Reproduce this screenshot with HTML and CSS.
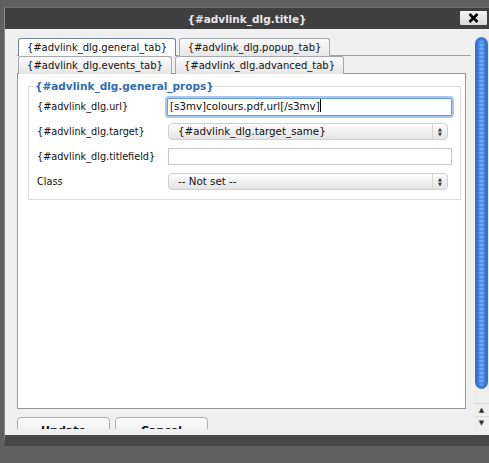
FILE: index.html
```html
<!DOCTYPE html>
<html>
<head>
    <title>{#advlink_dlg.title}</title>
    <link rel="stylesheet" href="styles.css">
</head>
<body>
    <div class="dialog">
        <div class="titlebar">
            <span class="title">{#advlink_dlg.title}</span>
            <button class="close-btn">
                <svg width="11" height="10" viewBox="0 0 11 10"><path d="M1.5 1 L9.5 9 M9.5 1 L1.5 9" stroke="#000" stroke-width="2.6" fill="none"/></svg>
            </button>
        </div>
        <div class="dialog-body">
            <div class="content">
                <div class="tabs">
                    <div class="tab-row first">
                        <span class="tab active" style="width: 158px">{#advlink_dlg.general_tab}</span>
                        <span class="tab" style="width: 151px">{#advlink_dlg.popup_tab}</span>
                    </div>
                    <div class="tab-row">
                        <span class="tab" style="width: 154px">{#advlink_dlg.events_tab}</span>
                        <span class="tab" style="width: 169px">{#advlink_dlg.advanced_tab}</span>
                    </div>
                </div>

                <div class="panel">
                    <fieldset class="props">
                        <legend>{#advlink_dlg.general_props}</legend>
                        <div class="row">
                            <label>{#advlink_dlg.url}</label>
                            <div class="field url-field">[s3mv]colours.pdf,url[/s3mv]<span class="caret"></span></div>
                        </div>
                        <div class="row">
                            <label>{#advlink_dlg.target}</label>
                            <div class="select">{#advlink_dlg.target_same}<span class="arrows">&#9650;<br>&#9660;</span></div>
                        </div>
                        <div class="row">
                            <label>{#advlink_dlg.titlefield}</label>
                            <div class="field"></div>
                        </div>
                        <div class="row">
                            <label>Class</label>
                            <div class="select">-- Not set --<span class="arrows">&#9650;<br>&#9660;</span></div>
                        </div>
                    </fieldset>
                </div>

                <div class="actions">
                    <button class="action">Update</button>
                    <button class="action">Cancel</button>
                </div>
            </div>

            <div class="scrollbar">
                <div class="thumb"></div>
                <div class="arrow up">&#9650;</div>
                <div class="arrow down">&#9660;</div>
            </div>
        </div>
    </div>
</body>
</html>
```

FILE: styles.css
```css
body {
    margin: 0;
    background-color: #5f5f5f;
    font-family: "DejaVu Sans", Verdana, sans-serif;
    font-size: 9.7px;
    color: #111;
    height: 463px;
    overflow: hidden;
}

.dialog {
    margin: 7px 0 0 4px;
    border-top: 1px solid #6c6c6c;
    border-left: 1px solid #8a8a8a;
    border-bottom: 11px solid #474747;
}

.titlebar {
    position: relative;
    height: 21px;
    background-color: #3f3f3f;
    display: flex;
    align-items: center;
    justify-content: center;
}

.title {
    color: #e8e8e8;
    font-weight: bold;
    font-size: 10.5px;
}

.close-btn {
    position: absolute;
    right: 2px;
    top: 3px;
    width: 27px;
    height: 14px;
    padding: 0;
    border: none;
    border-radius: 1px;
    background: linear-gradient(#f4f4f4, #dadada);
    display: flex;
    align-items: center;
    justify-content: center;
}

.dialog-body {
    height: 406px;
    background-color: #f0f0f0;
    display: flex;
}

.content {
    width: 458px;
    padding: 9px 0 0 12px;
    height: 391px;
    overflow: hidden;
}

.tabs {
    height: 35px;
}

.tab-row {
    display: flex;
    gap: 3px;
    height: 17px;
    padding-left: 1px;
}

.tab-row.first {
    border-bottom: 1px solid #9aa3aa;
    margin-right: 3px;
}

.tab {
    box-sizing: border-box;
    height: 18px;
    border: 1px solid #a4a9ad;
    border-bottom: none;
    border-radius: 3px 3px 0 0;
    background: linear-gradient(#fbfbfb, #e6e6e6);
    text-align: center;
    line-height: 17px;
    font-size: 10px;
}

.tab.active {
    background: #fff;
    border-color: #6e8496;
}

.panel {
    box-sizing: border-box;
    width: 449px;
    height: 336px;
    background-color: #fff;
    border: 1px solid #979797;
    padding: 6px 0 0 10px;
}

.props {
    width: 414px;
    margin: 0;
    padding: 2px 8px 5px 8px;
    border: 1px solid #dcdcdc;
}

legend {
    color: #2f6db5;
    font-weight: bold;
    font-size: 10.5px;
    padding: 0 1px;
    margin-left: -3px;
}

.row {
    display: flex;
    align-items: center;
    height: 25px;
}

.row label {
    width: 131px;
}

.field {
    box-sizing: border-box;
    width: 284px;
    height: 17px;
    border: 1px solid #c6c6c6;
    background: #fff;
    padding-left: 2px;
    line-height: 15px;
    font-size: 10.3px;
}

.url-field {
    height: 18px;
    border: 1px solid #6b9ad5;
    border-radius: 2px;
    box-shadow: 0 0 0 2px #a9c8ee;
    margin-left: -1px;
    width: 285px;
}

.caret {
    display: inline-block;
    width: 1px;
    height: 13px;
    background: #000;
    vertical-align: -2px;
}

.select {
    position: relative;
    box-sizing: border-box;
    width: 280px;
    height: 17px;
    border: 1px solid #cfcfcf;
    border-radius: 4px;
    background: linear-gradient(#fdfdfd, #e4e4e4);
    padding-left: 9px;
    line-height: 15px;
    font-size: 10.3px;
}

.arrows {
    position: absolute;
    right: 0;
    top: 0;
    width: 15px;
    height: 15px;
    border-left: 1px solid #d6d6d6;
    font-size: 5px;
    line-height: 5px;
    text-align: center;
    padding-top: 3px;
    box-sizing: border-box;
    color: #333;
}

.actions {
    display: flex;
    gap: 5px;
    margin-top: 8px;
}

.action {
    width: 93px;
    height: 22px;
    border: 1px solid #b0b0b0;
    border-radius: 4px 4px 0 0;
    background: linear-gradient(#fcfcfc, #ececec);
    font-family: "DejaVu Sans", Verdana, sans-serif;
    font-weight: bold;
    font-size: 11px;
    padding: 6px 0 0 0;
    line-height: 14px;
    color: #111;
}

.scrollbar {
    width: 15px;
    background: #eeeeee;
    display: flex;
    flex-direction: column;
    align-items: center;
    padding-top: 8px;
}

.thumb {
    width: 13px;
    height: 352px;
    border-radius: 7px;
    background: repeating-linear-gradient(#5d9bef 0, #5d9bef 2px, #79b0f5 2px, #79b0f5 4px);
    box-shadow: inset 3px 0 3px #2f6fd0, inset -3px 0 3px #2f6fd0;
    border: 1px solid #3a70c8;
    box-sizing: border-box;
}

.arrow {
    width: 15px;
    height: 12px;
    font-size: 7px;
    text-align: center;
    color: #333;
    line-height: 12px;
    border-top: 1px solid #dcdcdc;
}

.arrow.up {
    margin-top: 14px;
}
```
